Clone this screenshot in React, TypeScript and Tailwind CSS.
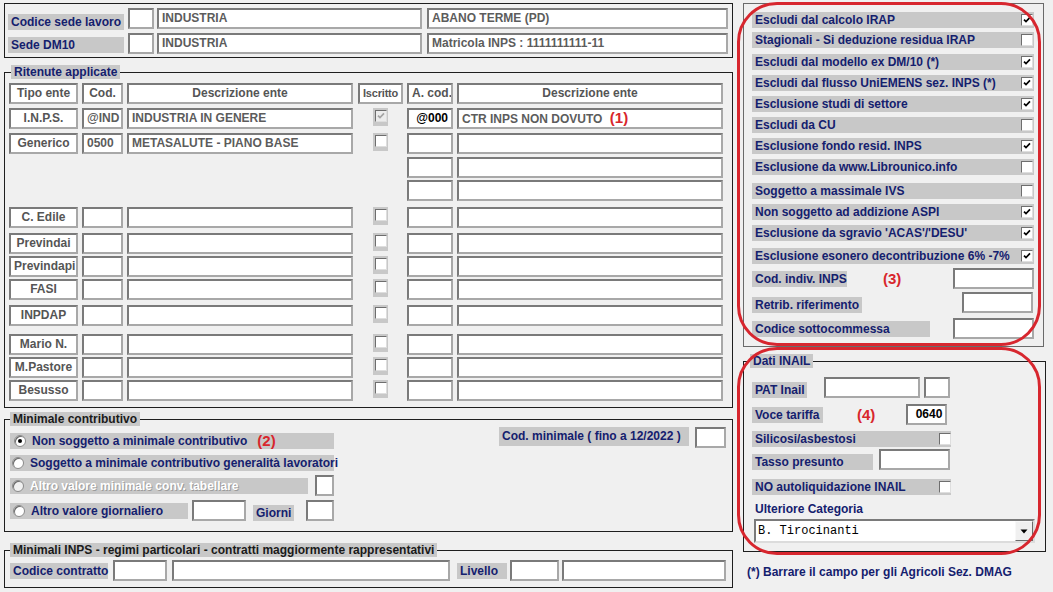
import React from 'react';

// grey caption strip, as in the old win32 form
const Lbl = ({ className = '', children }: { className?: string; children?: React.ReactNode }) => (
  <div className={`h-[16px] shrink-0 whitespace-nowrap bg-[#c8c8c8] px-[3px] leading-[16px] text-[#14206e] ${className}`}>
    {children}
  </div>
);

const Field = ({ className = '', children }: { className?: string; children?: React.ReactNode }) => (
  <div
    className={`h-[21px] shrink-0 overflow-hidden whitespace-nowrap border-2 border-[#7a7a7a] border-r-[#a8a8a8] border-b-[#a8a8a8] bg-white px-[3px] leading-[17px] text-[#5c5c5c] ${className}`}
  >
    {children}
  </div>
);

const Check = ({ checked = false, disabled = false }: { checked?: boolean; disabled?: boolean }) => (
  <div
    className={`flex h-[12px] w-[12px] shrink-0 items-center justify-center border border-[#6e6e6e] border-r-[#dedede] border-b-[#dedede] ${
      disabled ? 'bg-[#ececec]' : 'bg-white'
    }`}
  >
    {checked && (
      <svg width="8" height="8" viewBox="0 0 8 8">
        <path d="M1 3.6 L3 5.6 L7 1.4" stroke={disabled ? '#a4a4a4' : '#000'} strokeWidth="1.7" fill="none" />
      </svg>
    )}
  </div>
);

const Radio = ({ on = false, disabled = false }: { on?: boolean; disabled?: boolean }) => (
  <div
    className={`flex h-[12px] w-[12px] shrink-0 items-center justify-center rounded-full border border-[#8a8a8a] shadow-[inset_1px_1px_0_#6a6a6a] ${
      disabled ? 'bg-[#f0f0f0]' : 'bg-white'
    }`}
  >
    {on && <div className="h-[4px] w-[4px] rounded-full bg-black" />}
  </div>
);

const Red = ({ className = '', children }: { className?: string; children: React.ReactNode }) => (
  <span className={`text-[15px] leading-[16px] font-bold text-[#d8262c] ${className}`}>{children}</span>
);

type Ritenuta = {
  tipo?: string;
  cod?: string;
  desc?: string;
  chk?: 'on' | 'off';
  acod?: string;
  desc2?: React.ReactNode;
  mt: string;
};

const ritenute: Ritenuta[] = [
  {
    tipo: 'I.N.P.S.',
    cod: '@IND',
    desc: 'INDUSTRIA IN GENERE',
    chk: 'on',
    acod: '@000',
    desc2: (
      <>
        CTR INPS NON DOVUTO <Red className="ml-[4px]">(1)</Red>
      </>
    ),
    mt: 'mt-[4px]',
  },
  { tipo: 'Generico', cod: '0500', desc: 'METASALUTE - PIANO BASE', chk: 'off', mt: 'mt-[4px]' },
  { mt: 'mt-[3px]' },
  { mt: 'mt-[2px]' },
  { tipo: 'C. Edile', cod: '', desc: '', chk: 'off', mt: 'mt-[6px]' },
  { tipo: 'Previndai', cod: '', desc: '', chk: 'off', mt: 'mt-[5px]' },
  { tipo: 'Previndapi', cod: '', desc: '', chk: 'off', mt: 'mt-[2px]' },
  { tipo: 'FASI', cod: '', desc: '', chk: 'off', mt: 'mt-[2px]' },
  { tipo: 'INPDAP', cod: '', desc: '', chk: 'off', mt: 'mt-[5px]' },
  { tipo: 'Mario N.', cod: '', desc: '', chk: 'off', mt: 'mt-[8px]' },
  { tipo: 'M.Pastore', cod: '', desc: '', chk: 'off', mt: 'mt-[2px]' },
  { tipo: 'Besusso', cod: '', desc: '', chk: 'off', mt: 'mt-[2px]' },
];

const opzioni = [
  { t: 'Escludi dal calcolo IRAP', on: true, mt: 'mt-0' },
  { t: 'Stagionali - Si deduzione residua IRAP', on: false, mt: 'mt-[4px]' },
  { t: 'Escludi dal modello ex DM/10 (*)', on: true, mt: 'mt-[6px]' },
  { t: 'Escludi dal flusso UniEMENS sez. INPS (*)', on: true, mt: 'mt-[5px]' },
  { t: 'Esclusione studi di settore', on: true, mt: 'mt-[5px]' },
  { t: 'Escludi da CU', on: false, mt: 'mt-[5px]' },
  { t: 'Esclusione fondo resid. INPS', on: true, mt: 'mt-[5px]' },
  { t: 'Esclusione da www.Librounico.info', on: false, mt: 'mt-[5px]' },
  { t: 'Soggetto a massimale IVS', on: false, mt: 'mt-[8px]' },
  { t: 'Non soggetto ad addizione ASPI', on: true, mt: 'mt-[5px]' },
  { t: "Esclusione da sgravio 'ACAS'/'DESU'", on: true, mt: 'mt-[5px]' },
  { t: 'Esclusione esonero decontribuzione 6% -7%', on: true, mt: 'mt-[7px]' },
];

const headCell = 'text-center text-[#555]';

export default function App() {
  return (
    <div className="flex h-[592px] w-[1053px] overflow-hidden bg-[#f0f0f0] font-['Liberation_Sans',Arial,sans-serif] text-[12px] font-bold">
      {/* left column */}
      <div className="w-[737px] shrink-0 pt-[3px] pl-[4px]">
        {/* sede */}
        <div className="w-[729px] border border-[#1e1e1e] pt-[4px] pb-[3px] pl-[3px]">
          <div className="flex h-[21px] items-end">
            <Lbl className="mb-[-1px] w-[116px]">Codice sede lavoro</Lbl>
            <Field className="ml-[4px] w-[26px]" />
            <Field className="ml-[3px] w-[265px]">INDUSTRIA</Field>
            <Field className="ml-[5px] w-[301px]">ABANO TERME (PD)</Field>
          </div>
          <div className="mt-[4px] flex h-[21px] items-end">
            <Lbl className="mb-[1px] w-[116px]">Sede DM10</Lbl>
            <Field className="ml-[4px] w-[26px]" />
            <Field className="ml-[3px] w-[265px]">INDUSTRIA</Field>
            <Field className="ml-[5px] w-[301px]">Matricola INPS : 1111111111-11</Field>
          </div>
        </div>

        {/* ritenute */}
        <fieldset className="mt-[7px] w-[729px] border border-[#1e1e1e]">
          <legend className="ml-[6px] bg-[#c8c8c8] px-[3px] leading-[14px] text-[#14206e]">Ritenute applicate</legend>
          <div className="pt-[4px] pb-[6px]">
            <div className="flex h-[21px]">
              <Field className={`ml-[4px] w-[69px] ${headCell}`}>Tipo ente</Field>
              <Field className={`ml-[4px] w-[41px] ${headCell}`}>Cod.</Field>
              <Field className={`ml-[4px] w-[226px] ${headCell}`}>Descrizione ente</Field>
              <Field className={`ml-[5px] w-[45px] px-0 text-[11px] tracking-[-0.2px] ${headCell}`}>Iscritto</Field>
              <Field className={`ml-[4px] w-[46px] px-0 ${headCell}`}>A. cod.</Field>
              <Field className={`ml-[4px] w-[266px] ${headCell}`}>Descrizione ente</Field>
            </div>
            {ritenute.map((r, i) => (
              <div key={i} className={`flex h-[21px] ${r.mt}`}>
                {r.tipo !== undefined ? (
                  <>
                    <Field className={`ml-[4px] w-[69px] px-0 ${headCell}`}>{r.tipo}</Field>
                    <Field className="ml-[4px] w-[41px] px-[1px]">{r.cod}</Field>
                    <Field className="ml-[4px] w-[226px]">{r.desc}</Field>
                    <div className="ml-[5px] flex w-[45px] justify-center">
                      <div className="h-[18px] w-[15px] bg-[#c8c8c8] pt-[2px] pl-[2px]">
                        <Check checked={r.chk === 'on'} disabled={r.chk === 'on'} />
                      </div>
                    </div>
                  </>
                ) : (
                  <div className="w-[398px] shrink-0" />
                )}
                <Field className="ml-[4px] w-[46px] px-[1px] text-right text-black">{r.acod}</Field>
                <Field className="ml-[4px] w-[266px]">{r.desc2}</Field>
              </div>
            ))}
          </div>
        </fieldset>

        {/* minimale contributivo */}
        <fieldset className="mt-[4px] w-[729px] border border-[#1e1e1e]">
          <legend className="ml-[5px] bg-[#c8c8c8] px-[3px] leading-[14px] text-[#1a1a1a]">Minimale contributivo</legend>
          <div className="flex justify-between pt-[1px] pr-[6px] pb-[10px] pl-[5px]">
            <div className="pt-[6px]">
              <div className="flex h-[16px] w-[324px] items-center bg-[#c8c8c8] pl-[4px] text-[#14206e]">
                <Radio on />
                <span className="ml-[6px]">Non soggetto a minimale contributivo</span>
                <Red className="ml-[10px]">(2)</Red>
              </div>
              <div className="mt-[6px] flex h-[16px] w-[324px] items-center bg-[#c8c8c8] pl-[2px] text-[#14206e]">
                <Radio />
                <span className="ml-[6px] whitespace-nowrap">Soggetto a minimale contributivo generalità lavoratori</span>
              </div>
              <div className="mt-[4px] flex h-[21px] items-center">
                <div className="flex h-[16px] w-[298px] items-center bg-[#c8c8c8] pl-[2px] text-white [text-shadow:1px_1px_0_#9a9a9a]">
                  <Radio disabled />
                  <span className="ml-[6px]">Altro valore minimale conv. tabellare</span>
                </div>
                <Field className="ml-[7px] w-[19px]" />
              </div>
              <div className="mt-[4px] flex h-[21px] items-center">
                <div className="flex h-[16px] w-[178px] items-center bg-[#c8c8c8] pl-[3px] text-[#14206e]">
                  <Radio />
                  <span className="ml-[6px]">Altro valore giornaliero</span>
                </div>
                <Field className="ml-[4px] w-[54px]" />
                <Lbl className="mt-[4px] ml-[7px] w-[41px]">Giorni</Lbl>
                <Field className="ml-[12px] w-[28px]" />
              </div>
            </div>
            <div className="flex h-[21px] items-start">
              <Lbl className="h-[19px] w-[190px] leading-[19px]">Cod. minimale ( fino a 12/2022 )</Lbl>
              <Field className="ml-[6px] w-[31px]" />
            </div>
          </div>
        </fieldset>

        {/* minimali INPS */}
        <fieldset className="mt-[11px] w-[729px] border border-[#1e1e1e]">
          <legend className="ml-[5px] bg-[#c8c8c8] px-[3px] leading-[14px] text-[#1a1a1a]">
            Minimali INPS - regimi particolari - contratti maggiormente rappresentativi
          </legend>
          <div className="mt-[3px] mb-[6px] flex h-[21px] items-center pl-[5px]">
            <Lbl className="w-[98px]">Codice contratto</Lbl>
            <Field className="ml-[5px] w-[54px]" />
            <Field className="ml-[5px] w-[278px]" />
            <Lbl className="ml-[7px] w-[50px]">Livello</Lbl>
            <Field className="ml-[3px] w-[49px]" />
            <Field className="ml-[3px] w-[164px]" />
          </div>
        </fieldset>
      </div>

      {/* right column */}
      <div className="relative flex-1 pt-[3px] pl-[6px]">
        <div className="w-[301px] border border-[#6a6a6a] pt-[8px] pr-[9px] pb-[7px] pl-[8px]">
          {opzioni.map((o) => (
            <div key={o.t} className={`flex h-[16px] items-center bg-[#c8c8c8] pl-[3px] text-[#14206e] ${o.mt}`}>
              <span className="whitespace-nowrap">{o.t}</span>
              <div className="mr-[1px] ml-auto">
                <Check checked={o.on} />
              </div>
            </div>
          ))}
          <div className="mt-[4px] flex h-[21px] items-center">
            <Lbl className="w-[95px]">Cod. indiv. INPS</Lbl>
            <Red className="ml-[36px]">(3)</Red>
            <Field className="ml-auto w-[81px]" />
          </div>
          <div className="mt-[3px] flex h-[21px] items-end">
            <Lbl className="w-[110px]">Retrib. riferimento</Lbl>
            <Field className="mr-[1px] ml-auto w-[71px]" />
          </div>
          <div className="mt-[5px] flex h-[21px] items-center">
            <Lbl className="w-[178px]">Codice sottocommessa</Lbl>
            <Field className="ml-auto w-[81px]" />
          </div>
        </div>

        <fieldset className="mt-[7px] w-[303px] border border-[#1e1e1e]">
          <legend className="ml-[6px] bg-[#c8c8c8] px-[3px] leading-[14px] text-[#14206e]">Dati INAIL</legend>
          <div className="pt-[9px] pb-[8px] pl-[8px]">
            <div className="flex h-[21px] items-end">
              <Lbl className="w-[55px]">PAT Inail</Lbl>
              <Field className="ml-[17px] w-[96px]" />
              <Field className="ml-[4px] w-[26px]" />
            </div>
            <div className="mt-[6px] flex h-[21px] items-center">
              <Lbl className="w-[71px]">Voce tariffa</Lbl>
              <Red className="ml-[34px]">(4)</Red>
              <Field className="ml-[31px] w-[41px] border-[#1e1e1e] border-r-[#9a9a9a] border-b-[#9a9a9a] px-[2px] text-right text-black">
                0640
              </Field>
            </div>
            <div className="mt-[6px] flex h-[16px] w-[199px] items-center bg-[#c8c8c8] pl-[3px] text-[#14206e]">
              <span>Silicosi/asbestosi</span>
              <div className="ml-auto">
                <Check />
              </div>
            </div>
            <div className="mt-[2px] flex h-[21px] items-end">
              <Lbl className="w-[121px]">Tasso presunto</Lbl>
              <Field className="ml-[6px] w-[71px]" />
            </div>
            <div className="mt-[9px] flex h-[16px] w-[199px] items-center bg-[#c8c8c8] pl-[3px] text-[#14206e]">
              <span>NO autoliquidazione INAIL</span>
              <div className="ml-auto">
                <Check />
              </div>
            </div>
            <div className="mt-[7px] pl-[3px] leading-[14px] text-[#14206e]">Ulteriore Categoria</div>
            <div className="mt-[3px] ml-[2px] flex h-[24px] w-[281px] items-center border-2 border-[#7a7a7a] border-r-[#dcdcdc] border-b-[#dcdcdc] bg-white">
              <span className="pl-[2px] font-['Liberation_Mono',monospace] text-[12px] font-normal text-black">
                B. Tirocinanti
              </span>
              <div className="ml-auto flex h-[20px] w-[18px] items-center justify-center border border-[#f8f8f8] border-r-[#6a6a6a] border-b-[#6a6a6a] bg-[#f0f0f0]">
                <svg width="8" height="5" viewBox="0 0 8 5">
                  <path d="M0.5 0.5 L7.5 0.5 L4 4.5 Z" fill="#000" />
                </svg>
              </div>
            </div>
          </div>
        </fieldset>

        <div className="mt-[13px] ml-[4px] leading-[14px] text-[#14206e]">(*) Barrare il campo per gli Agricoli Sez. DMAG</div>

        {/* red annotation ovals */}
        <div className="pointer-events-none absolute top-[2px] left-0 h-[344px] w-[304px] rounded-[40px] border-[3px] border-[#d7262e]" />
        <div className="pointer-events-none absolute top-[347px] left-0 h-[208px] w-[304px] rounded-[40px] border-[3px] border-[#d7262e]" />
      </div>
    </div>
  );
}
